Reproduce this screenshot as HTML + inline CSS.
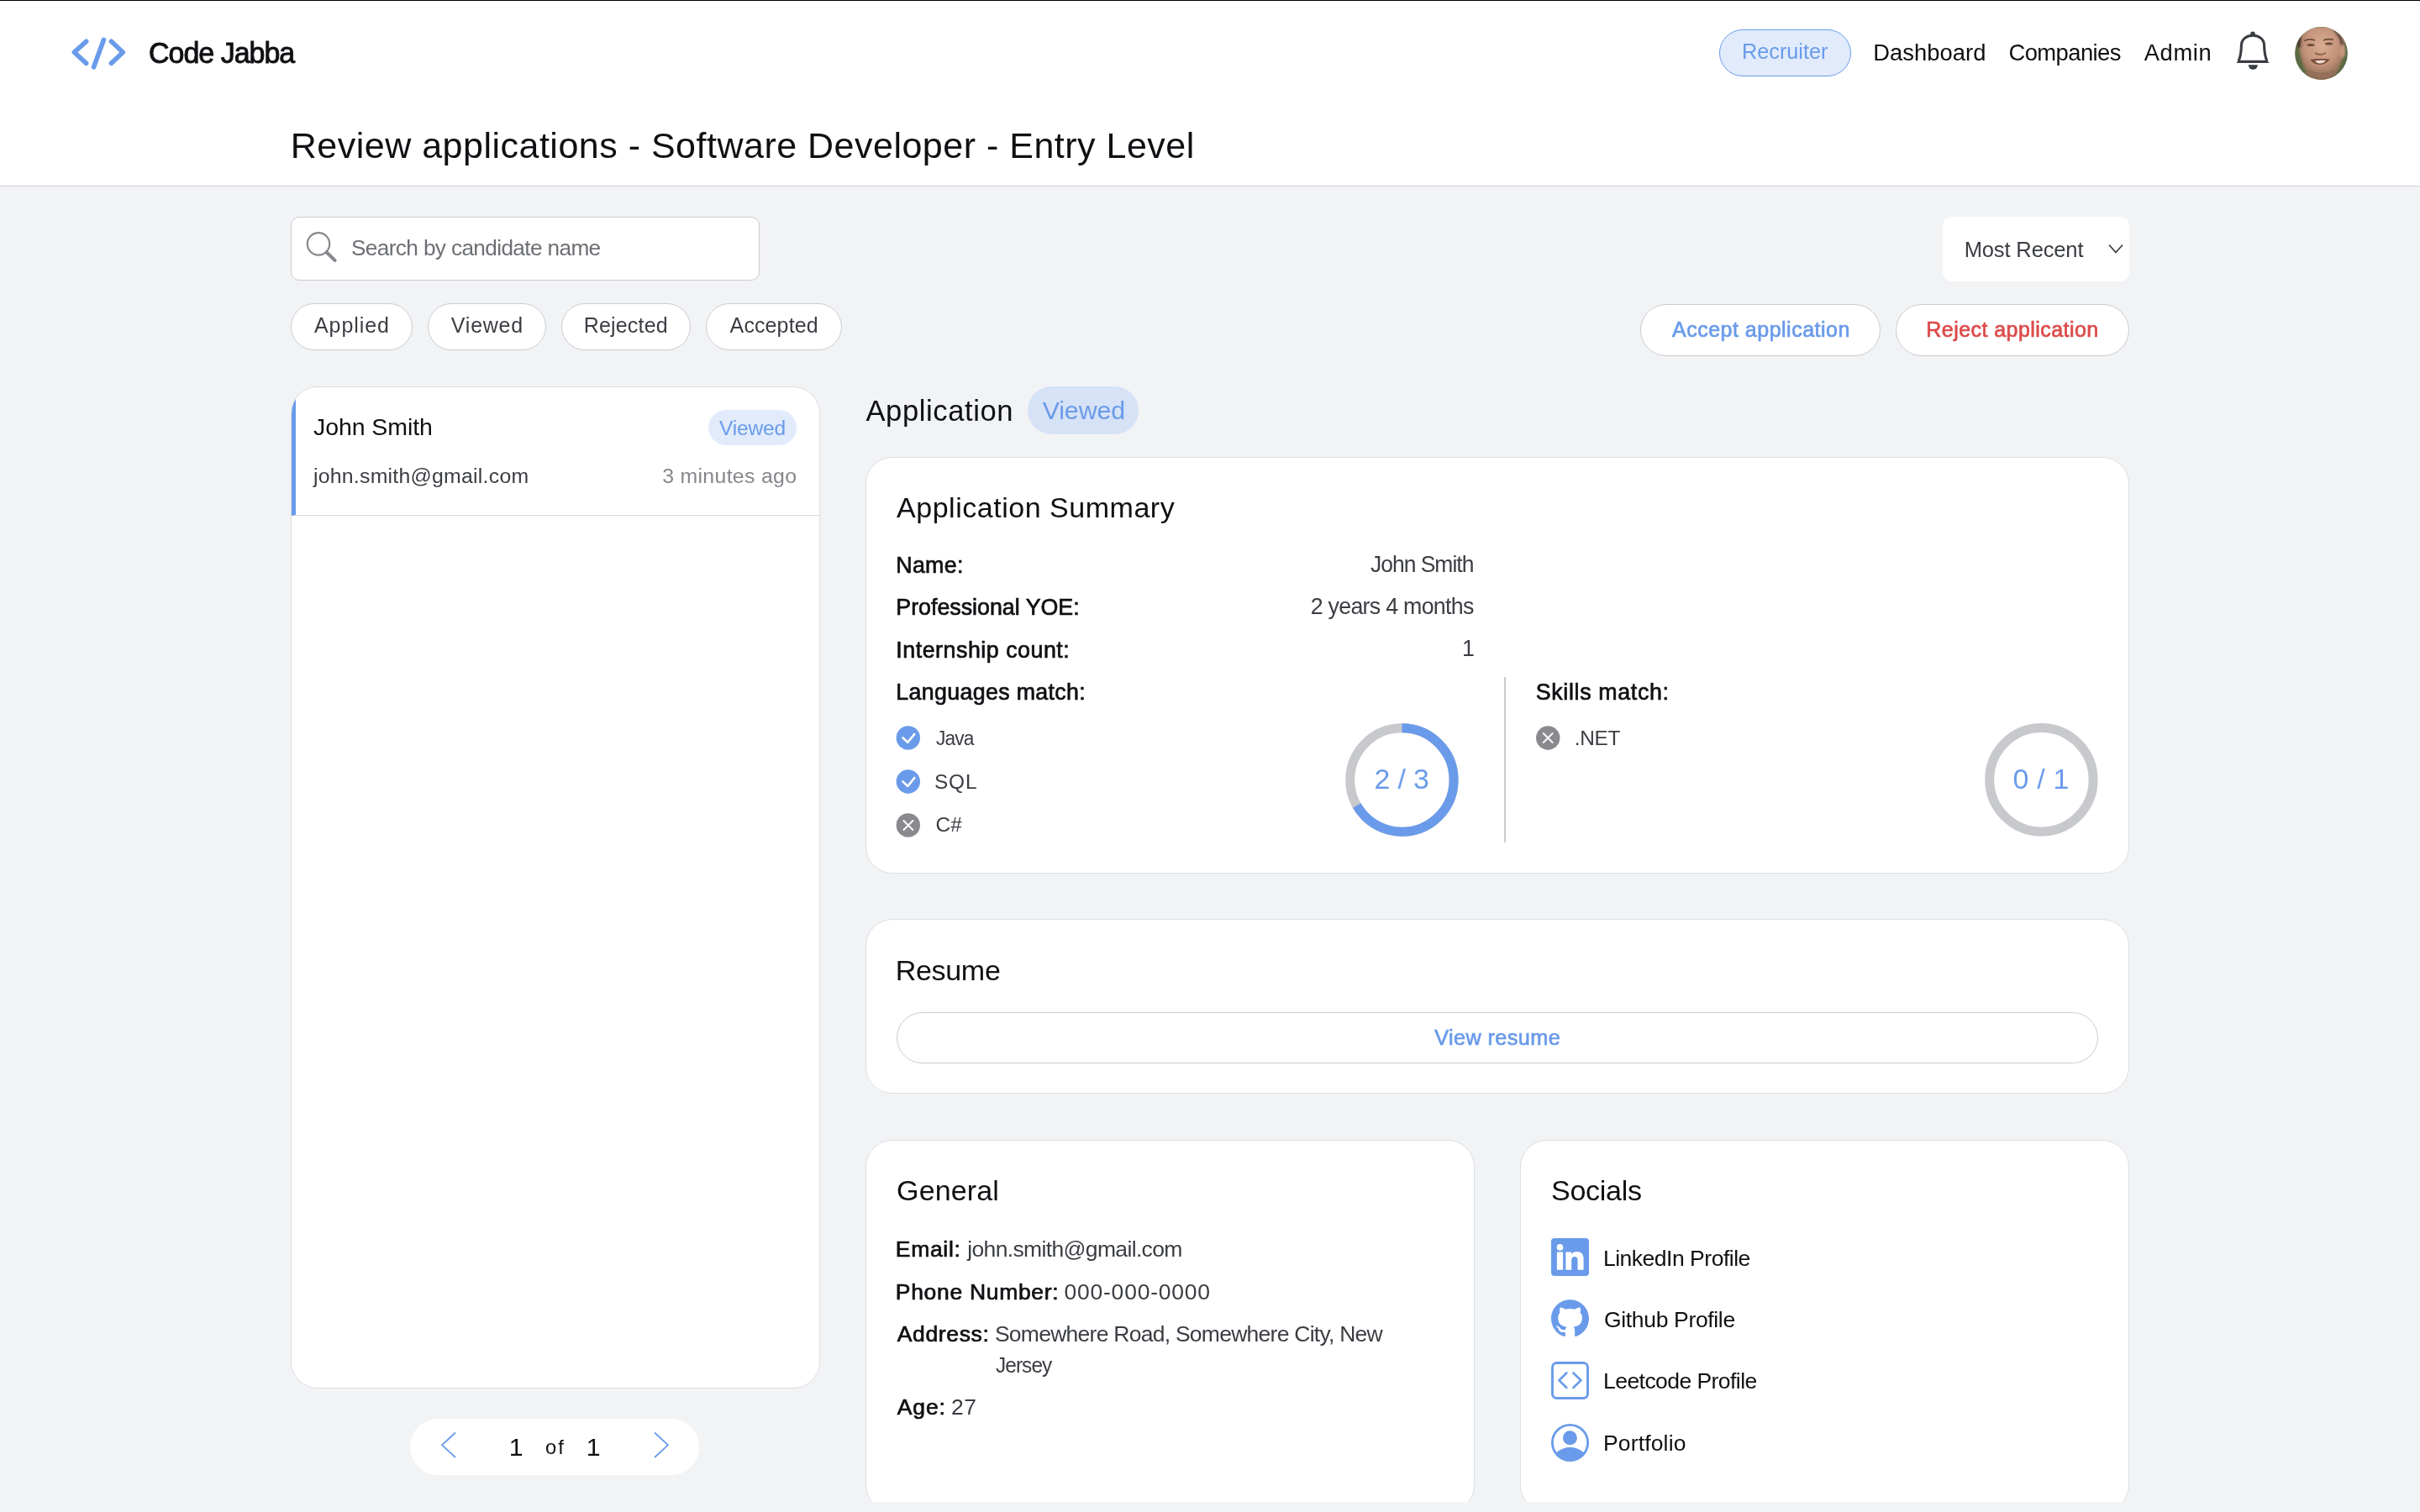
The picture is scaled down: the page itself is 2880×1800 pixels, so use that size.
<!DOCTYPE html>
<html><head><meta charset="utf-8"><title>Review applications</title>
<style>
html,body{margin:0;padding:0}
body{width:2880px;height:1800px;position:relative;overflow:hidden;background:#f2f3f5;font-family:"Liberation Sans",sans-serif}
.a{position:absolute;box-sizing:border-box}
.t{position:absolute;line-height:1;white-space:nowrap;font-family:"Liberation Sans",sans-serif}
.card{position:absolute;box-sizing:border-box;background:#fff;border:1px solid #dcdfe3;border-radius:32px}
.pill{position:absolute;box-sizing:border-box;background:#fff;border:1px solid #c9ccd1;border-radius:999px}
@media (max-width:2000px){html{zoom:0.5}}
</style></head>
<body>
<div class="a" style="left:0;top:0;width:2880px;height:221px;background:#fff"></div>
<div class="a" style="left:0;top:221px;width:2880px;height:1px;background:#cdd0d4"></div>
<div class="a" style="left:0;top:0;width:2880px;height:1px;background:#000"></div>
<!-- recruiter pill -->
<div class="a" style="left:2046px;top:35px;width:157px;height:56px;border:1.5px solid #6a9bea;border-radius:28px;background:#e1ebfb"></div>
<!-- avatar -->
<svg class="a" style="left:2731px;top:32px" width="63" height="63" viewBox="0 0 63 63">
  <defs>
    <clipPath id="avc"><circle cx="31.5" cy="31.5" r="31.4"/></clipPath>
    <filter id="avb" x="-20%" y="-20%" width="140%" height="140%"><feGaussianBlur stdDeviation="1.2"/></filter>
    <filter id="avs" x="-20%" y="-20%" width="140%" height="140%"><feGaussianBlur stdDeviation="0.6"/></filter>
    <radialGradient id="avg" cx="0.5" cy="0.35" r="0.6">
      <stop offset="0" stop-color="#d9ab91"/><stop offset="0.6" stop-color="#c4937b"/><stop offset="1" stop-color="#8e6c57"/>
    </radialGradient>
  </defs>
  <g clip-path="url(#avc)">
    <rect width="63" height="63" fill="#5b6b43"/>
    <g filter="url(#avb)">
      <path d="M6,0 L57,0 C60,12 60,28 56,40 C53,50 48,58 46,64 L17,64 C15,58 12,50 9,42 C5,30 3,12 6,0 Z" fill="url(#avg)"/>
      <path d="M47,3 C53,7 57,14 58,23 L55,22 C54,15 51,9 46,5 Z" fill="#3a2e28"/>
      <path d="M3,10 C5,8 7,9 8,12 L7,25 L3,24 Z" fill="#4a3a30"/>
      <ellipse cx="57" cy="29" rx="3" ry="8" fill="#c6967d"/>
    </g>
    <g filter="url(#avs)">
      <path d="M11,16.5 Q17,13.5 24,16" stroke="#6b4b3b" stroke-width="1.6" fill="none"/>
      <path d="M34,16 Q40,13.5 46,15.5" stroke="#6b4b3b" stroke-width="1.6" fill="none"/>
      <ellipse cx="19" cy="21.5" rx="4.5" ry="1.5" fill="#6a4c3e"/>
      <ellipse cx="40.5" cy="20" rx="4.5" ry="1.5" fill="#6a4c3e"/>
      <path d="M24,31 Q30,35 37,31" stroke="#8a6250" stroke-width="2" fill="none"/>
      <path d="M18,39 Q30,37 42,38.5 Q36,45.5 30,45 Q23,45 18,39 Z" fill="#7a5040"/>
      <path d="M24,40.5 Q30,39.5 37,40 Q34,43.5 30,43.5 Q26,43.5 24,40.5 Z" fill="#f0ddd2"/>
      <path d="M15,52 Q31,60 47,52" stroke="#8e6c57" stroke-width="3" fill="none" opacity="0.6"/>
    </g>
  </g>
</svg>
<!-- search -->
<div class="a" style="left:346px;top:258px;width:558px;height:76px;background:#fff;border:1px solid #c9ccd1;border-radius:10px"></div>
<div class="pill" style="left:346px;top:361px;width:145px;height:56px"></div>
<div class="pill" style="left:509px;top:361px;width:141px;height:56px"></div>
<div class="pill" style="left:668px;top:361px;width:154px;height:56px"></div>
<div class="pill" style="left:840px;top:361px;width:162px;height:56px"></div>
<!-- sort -->
<div class="a" style="left:2312px;top:258px;width:222px;height:77px;background:#fff;border-radius:10px"></div>
<div class="pill" style="left:1952px;top:362px;width:286px;height:62px"></div>
<div class="pill" style="left:2256px;top:362px;width:278px;height:62px"></div>
<!-- list card -->
<div class="card" style="left:346px;top:460px;width:630px;height:1193px;overflow:hidden">
  <div class="a" style="left:0;top:0;width:628px;height:153px;border-bottom:1px solid #d9dce0;border-left:5px solid #6a9bea"></div>
</div>
<div class="a" style="left:843px;top:488px;width:105px;height:42px;border-radius:21px;background:#e1ebfb"></div>
<div class="a" style="left:488px;top:1689px;width:344px;height:67px;border-radius:34px;background:#fff"></div>
<!-- application badge -->
<div class="a" style="left:1223px;top:460px;width:132px;height:57px;border-radius:29px;background:#d6e2f6"></div>
<!-- summary card -->
<div class="card" style="left:1030px;top:544px;width:1504px;height:496px"></div>
<div class="a" style="left:1790px;top:806px;width:2px;height:197px;background:#c9cbcf"></div>
<!-- resume -->
<div class="card" style="left:1030px;top:1094px;width:1504px;height:208px"></div>
<div class="pill" style="left:1067px;top:1205px;width:1430px;height:61px"></div>
<!-- general / socials -->
<div class="card" style="left:1030px;top:1357px;width:725px;height:443px"></div>
<div class="card" style="left:1809px;top:1357px;width:725px;height:443px"></div>
<div class="a" style="left:0;top:1788px;width:2880px;height:12px;background:#f2f3f5"></div>

<svg class="a" style="left:0;top:0" width="2880" height="1800" viewBox="0 0 2880 1800" fill="none">
  <!-- logo -->
  <g stroke="#6a9bea" stroke-width="5.6" stroke-linecap="round" stroke-linejoin="round">
    <polyline points="102.7,49.3 88.4,62.2 102.7,75.4"/>
    <line x1="123.4" y1="47.5" x2="111.6" y2="79.8"/>
    <polyline points="132.4,49.3 146.3,62.2 132.4,75.4"/>
  </g>
  <!-- bell -->
  <g fill="#3a3d42">
    <circle cx="2681" cy="40.2" r="2.8"/>
    <path d="M2675.7,77.3 A5.6,5.6 0 0 0 2686.9,77.3 Z"/>
    <path d="M2661.6,74.9 L2700.3,74.9 L2698.3,71.7 L2663.6,71.7 Z"/>
  </g>
  <path d="M2664.2,72.5 C2666.5,67 2667.3,61 2667.4,54 C2667.6,46.5 2673.5,42.3 2681,42.3 C2688.5,42.3 2694.4,46.5 2694.6,54 C2694.7,61 2695.5,67 2697.8,72.5" stroke="#3a3d42" stroke-width="3.1"/>
  <!-- search icon -->
  <g stroke="#85888c" stroke-linecap="round">
    <circle cx="379" cy="290.4" r="13.2" stroke-width="2.2"/>
    <line x1="388.6" y1="300.2" x2="398.6" y2="310" stroke-width="4"/>
  </g>
  <!-- select chevron -->
  <polyline points="2510,291.5 2518,300.5 2526,291.5" stroke="#3a3d42" stroke-width="1.7" stroke-linejoin="miter"/>
  <!-- pagination chevrons -->
  <polyline points="542,1705.5 526,1720.3 542,1735" stroke="#6a9bea" stroke-width="1.8"/>
  <polyline points="779,1705.5 795,1720.3 779,1735" stroke="#6a9bea" stroke-width="1.8"/>
  <!-- checks -->
  <g>
    <circle cx="1080.8" cy="878.4" r="14.2" fill="#6a9bea"/>
    <polyline points="1074.4,878.3 1080.3,883.8 1088.3,873.9" stroke="#fff" stroke-width="2.6" stroke-linecap="round" stroke-linejoin="round"/>
    <circle cx="1080.8" cy="930.5" r="14.2" fill="#6a9bea"/>
    <polyline points="1074.4,930.4 1080.3,935.9 1088.3,926" stroke="#fff" stroke-width="2.6" stroke-linecap="round" stroke-linejoin="round"/>
    <circle cx="1080.8" cy="982.4" r="14.2" fill="#898a8e"/>
    <g stroke="#fff" stroke-width="1.8"><line x1="1074.9" y1="976.5" x2="1086.9" y2="988.5"/><line x1="1086.9" y1="976.5" x2="1074.9" y2="988.5"/></g>
    <circle cx="1842.2" cy="878.5" r="14.2" fill="#898a8e"/>
    <g stroke="#fff" stroke-width="1.8"><line x1="1836.2" y1="872.5" x2="1848.2" y2="884.5"/><line x1="1848.2" y1="872.5" x2="1836.2" y2="884.5"/></g>
  </g>
  <!-- donuts -->
  <circle cx="1668.4" cy="928.5" r="61.7" stroke="#c8c9cc" stroke-width="11"/>
  <circle cx="1668.4" cy="928.5" r="61.7" stroke="#6a9bea" stroke-width="11" stroke-dasharray="258.4 400" transform="rotate(-90 1668.4 928.5)"/>
  <circle cx="2429.4" cy="928.3" r="61.7" stroke="#c8c9cc" stroke-width="11"/>
  <!-- linkedin -->
  <rect x="1846" y="1474" width="45" height="45" rx="4" fill="#6a9bea"/>
  <g fill="#fff">
    <circle cx="1856.5" cy="1484.9" r="3.8"/>
    <rect x="1852.9" y="1490.5" width="7.2" height="21.2"/>
    <path d="M1863.4,1490.5 h6.8 v2.8 c1.3,-2.2 3.6,-3.3 6.6,-3.3 c5,0 7.8,3.2 7.8,8.8 v12.9 h-7.1 v-11.6 c0,-2.6 -1.1,-4 -3.5,-4 c-2.4,0 -3.8,1.6 -3.8,4.3 v11.3 h-6.8 z"/>
  </g>
  <!-- github -->
  <g transform="translate(1846,1547.2) scale(2.8125)">
    <path fill="#6a9bea" d="M8 0C3.58 0 0 3.58 0 8c0 3.54 2.29 6.53 5.47 7.59.4.07.55-.17.55-.38 0-.19-.01-.82-.01-1.49-2.01.37-2.53-.49-2.69-.94-.09-.23-.48-.94-.82-1.13-.28-.15-.68-.52-.01-.53.63-.01 1.08.58 1.23.82.72 1.21 1.87.87 2.33.66.07-.52.28-.87.51-1.07-1.78-.2-3.64-.89-3.64-3.95 0-.87.31-1.59.82-2.15-.08-.2-.36-1.02.08-2.12 0 0 .67-.21 2.2.82.64-.18 1.32-.27 2-.27.68 0 1.36.09 2 .27 1.53-1.04 2.2-.82 2.2-.82.44 1.1.16 1.92.08 2.12.51.56.82 1.27.82 2.15 0 3.07-1.87 3.75-3.65 3.95.29.25.54.73.54 1.48 0 1.07-.01 1.93-.01 2.2 0 .21.15.46.55.38A8.013 8.013 0 0016 8c0-4.42-3.58-8-8-8z"/>
  </g>
  <!-- leetcode -->
  <rect x="1847.5" y="1622.5" width="42" height="42" rx="5" stroke="#6a9bea" stroke-width="2.9"/>
  <g stroke="#6a9bea" stroke-width="2.6" stroke-linecap="round" stroke-linejoin="miter">
    <polyline points="1864.3,1634.5 1855.5,1643.3 1864.3,1652"/>
    <polyline points="1872.4,1634.5 1881.5,1643.3 1872.4,1652"/>
  </g>
  <!-- portfolio -->
  <defs><clipPath id="pc"><circle cx="1868.5" cy="1717.5" r="21"/></clipPath></defs>
  <circle cx="1868.5" cy="1717.5" r="21.1" stroke="#6a9bea" stroke-width="2.8"/>
  <circle cx="1868.4" cy="1711.8" r="8.5" fill="#6a9bea"/>
  <ellipse cx="1868.5" cy="1742" rx="22" ry="19" fill="#6a9bea" clip-path="url(#pc)"/>
</svg>

<div id="tx" style="position:absolute;left:0;top:0;width:2880px;height:1800px;will-change:transform"><div class="t" style="left:177.0px;top:46.3px;font-size:34.47px;color:#0f1013;-webkit-text-stroke:0.9px #0f1013;letter-spacing:-1.00px;transform:scaleX(0.985);transform-origin:0 0">Code Jabba</div>
<div class="t" style="left:2073.0px;top:49.0px;font-size:25.26px;color:#6a9bea">Recruiter</div>
<div class="t" style="left:2229.3px;top:49.0px;font-size:27.35px;color:#0f1013;letter-spacing:0.05px">Dashboard</div>
<div class="t" style="left:2390.5px;top:49.0px;font-size:27.35px;color:#0f1013;letter-spacing:-0.55px">Companies</div>
<div class="t" style="left:2551.8px;top:49.0px;font-size:27.35px;color:#0f1013;letter-spacing:0.58px">Admin</div>
<div class="t" style="left:345.8px;top:151.8px;font-size:42.98px;color:#0f1013;letter-spacing:0.51px">Review applications - Software Developer - Entry Level</div>
<div class="t" style="left:418.0px;top:282.2px;font-size:26.23px;color:#6c6f74;letter-spacing:-0.64px">Search by candidate name</div>
<div class="t" style="left:374.0px;top:375.2px;font-size:24.98px;color:#3a3d42;letter-spacing:0.93px">Applied</div>
<div class="t" style="left:536.8px;top:375.2px;font-size:24.98px;color:#3a3d42;letter-spacing:0.79px">Viewed</div>
<div class="t" style="left:694.8px;top:375.2px;font-size:24.98px;color:#3a3d42;letter-spacing:0.18px">Rejected</div>
<div class="t" style="left:868.6px;top:375.2px;font-size:24.98px;color:#3a3d42;letter-spacing:0.13px">Accepted</div>
<div class="t" style="left:2337.7px;top:285.0px;font-size:25.54px;color:#3a3d42;letter-spacing:-0.15px">Most Recent</div>
<div class="t" style="left:1990.0px;top:380.1px;font-size:24.98px;color:#6a9bea;-webkit-text-stroke:0.7px #6a9bea;letter-spacing:0.51px">Accept application</div>
<div class="t" style="left:2292.3px;top:380.1px;font-size:24.98px;color:#dc4b4b;-webkit-text-stroke:0.7px #dc4b4b;letter-spacing:0.46px">Reject application</div>
<div class="t" style="left:373.0px;top:494.0px;font-size:28.47px;color:#0f1013;letter-spacing:-0.06px">John Smith</div>
<div class="t" style="left:855.9px;top:497.5px;font-size:24.56px;color:#6a9bea;letter-spacing:-0.14px">Viewed</div>
<div class="t" style="left:372.9px;top:554.7px;font-size:24.84px;color:#3a3d42;letter-spacing:0.25px">john.smith@gmail.com</div>
<div class="t" style="left:788.2px;top:554.7px;font-size:24.84px;color:#85878b;letter-spacing:0.32px">3 minutes ago</div>
<div class="t" style="left:1030.4px;top:472.2px;font-size:34.61px;color:#0f1013;letter-spacing:0.58px">Application</div>
<div class="t" style="left:1240.7px;top:472.8px;font-size:30.42px;color:#6a9bea;letter-spacing:-0.15px">Viewed</div>
<div class="t" style="left:1067.0px;top:587.0px;font-size:34.05px;color:#0f1013;letter-spacing:0.50px">Application Summary</div>
<div class="t" style="left:1066.3px;top:660.0px;font-size:26.79px;color:#0f1013;-webkit-text-stroke:0.7px #0f1013;letter-spacing:0.29px">Name:</div>
<div class="t" style="left:1631.4px;top:659.0px;font-size:26.79px;color:#3a3d42;letter-spacing:-1.00px;transform:scaleX(0.987);transform-origin:0 0">John Smith</div>
<div class="t" style="left:1066.3px;top:709.8px;font-size:26.79px;color:#0f1013;-webkit-text-stroke:0.7px #0f1013">Professional YOE:</div>
<div class="t" style="left:1559.7px;top:708.9px;font-size:26.79px;color:#3a3d42;letter-spacing:-0.72px">2 years 4 months</div>
<div class="t" style="left:1066.3px;top:760.9px;font-size:26.79px;color:#0f1013;-webkit-text-stroke:0.7px #0f1013;letter-spacing:0.53px">Internship count:</div>
<div class="t" style="left:1740.0px;top:759.2px;font-size:26.79px;color:#3a3d42">1</div>
<div class="t" style="left:1066.3px;top:811.2px;font-size:26.79px;color:#0f1013;-webkit-text-stroke:0.7px #0f1013;letter-spacing:0.34px">Languages match:</div>
<div class="t" style="left:1113.5px;top:866.8px;font-size:24.42px;color:#3a3d42;letter-spacing:-1.00px;transform:scaleX(0.933);transform-origin:0 0">Java</div>
<div class="t" style="left:1112.0px;top:918.9px;font-size:24.42px;color:#3a3d42;letter-spacing:0.82px">SQL</div>
<div class="t" style="left:1113.4px;top:970.4px;font-size:24.42px;color:#3a3d42;letter-spacing:0.17px">C#</div>
<div class="t" style="left:1635.6px;top:910.9px;font-size:33.91px;color:#6a9bea;letter-spacing:-0.18px">2 / 3</div>
<div class="t" style="left:1827.8px;top:810.9px;font-size:26.79px;color:#0f1013;-webkit-text-stroke:0.7px #0f1013;letter-spacing:0.65px">Skills match:</div>
<div class="t" style="left:1873.7px;top:867.4px;font-size:24.42px;color:#3a3d42;letter-spacing:-0.26px">.NET</div>
<div class="t" style="left:2395.4px;top:910.9px;font-size:33.91px;color:#6a9bea;letter-spacing:0.25px">0 / 1</div>
<div class="t" style="left:1065.7px;top:1137.5px;font-size:34.05px;color:#0f1013;letter-spacing:-0.33px">Resume</div>
<div class="t" style="left:1707.2px;top:1223.0px;font-size:25.26px;color:#6a9bea;-webkit-text-stroke:0.7px #6a9bea;letter-spacing:0.40px">View resume</div>
<div class="t" style="left:1067.1px;top:1399.8px;font-size:34.05px;color:#0f1013;letter-spacing:0.11px">General</div>
<div class="t" style="left:1065.8px;top:1473.5px;font-size:26.51px;color:#0f1013;-webkit-text-stroke:0.7px #0f1013;letter-spacing:0.69px">Email:</div>
<div class="t" style="left:1151.3px;top:1473.5px;font-size:26.51px;color:#3a3d42;letter-spacing:-0.65px">john.smith@gmail.com</div>
<div class="t" style="left:1065.8px;top:1524.7px;font-size:26.51px;color:#0f1013;-webkit-text-stroke:0.7px #0f1013;letter-spacing:0.69px">Phone Number:</div>
<div class="t" style="left:1266.5px;top:1524.7px;font-size:26.51px;color:#3a3d42;letter-spacing:0.77px">000-000-0000</div>
<div class="t" style="left:1067.8px;top:1574.9px;font-size:26.51px;color:#0f1013;-webkit-text-stroke:0.7px #0f1013;letter-spacing:0.63px">Address:</div>
<div class="t" style="left:1183.9px;top:1574.9px;font-size:26.51px;color:#3a3d42;letter-spacing:-0.74px">Somewhere Road, Somewhere City, New</div>
<div class="t" style="left:1184.5px;top:1611.7px;font-size:26.51px;color:#3a3d42;letter-spacing:-1.00px;transform:scaleX(0.920);transform-origin:0 0">Jersey</div>
<div class="t" style="left:1067.8px;top:1661.9px;font-size:26.51px;color:#0f1013;-webkit-text-stroke:0.7px #0f1013;letter-spacing:0.88px">Age:</div>
<div class="t" style="left:1132.0px;top:1661.9px;font-size:26.51px;color:#3a3d42;letter-spacing:0.56px">27</div>
<div class="t" style="left:1846.1px;top:1399.8px;font-size:34.05px;color:#0f1013;letter-spacing:-0.31px">Socials</div>
<div class="t" style="left:1907.9px;top:1485.0px;font-size:26.51px;color:#0f1013;letter-spacing:-0.48px">LinkedIn Profile</div>
<div class="t" style="left:1909.0px;top:1558.0px;font-size:26.51px;color:#0f1013;letter-spacing:-0.34px">Github Profile</div>
<div class="t" style="left:1908.0px;top:1631.2px;font-size:26.51px;color:#0f1013;letter-spacing:-0.55px">Leetcode Profile</div>
<div class="t" style="left:1908.0px;top:1705.0px;font-size:26.51px;color:#0f1013;letter-spacing:0.15px">Portfolio</div>
<div class="t" style="left:605.7px;top:1707.7px;font-size:30.28px;color:#0f1013">1</div>
<div class="t" style="left:649.0px;top:1711.7px;font-size:23.72px;color:#0f1013;letter-spacing:2.11px">of</div>
<div class="t" style="left:697.7px;top:1707.7px;font-size:30.28px;color:#0f1013">1</div></div>
</body></html>
